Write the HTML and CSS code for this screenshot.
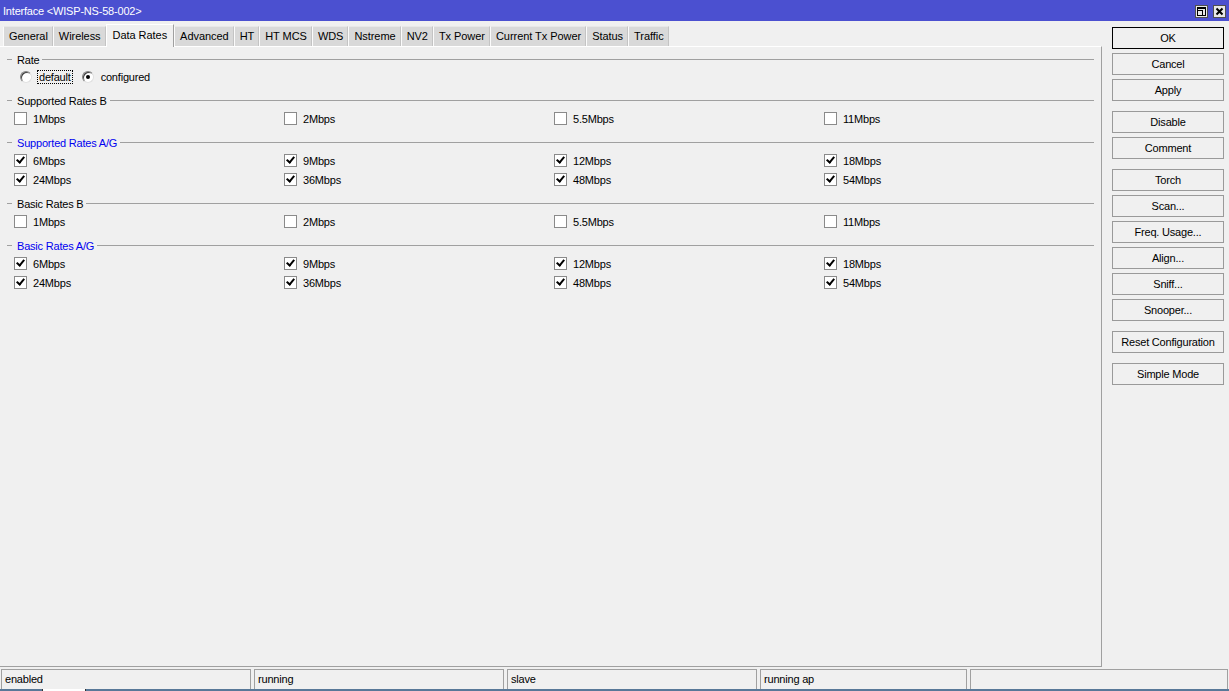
FILE: index.html
```html
<!DOCTYPE html>
<html lang="en">
<head>
    <meta charset="UTF-8">
    <title>Interface &lt;WISP-NS-58-002&gt;</title>
    <link rel="stylesheet" href="styles.css">
</head>
<body>
<div class="window">
    <div class="titlebar">
        <span class="title">Interface &lt;WISP-NS-58-002&gt;</span>
        <div class="win-btns">
            <span class="win-btn">
                <svg width="13" height="13" viewBox="0 0 13 13">
                    <rect x="0.5" y="0.5" width="12" height="12" fill="#e8e8e8" stroke="#505050"/>
                    <rect x="2.5" y="2.5" width="8" height="8" fill="none" stroke="#000"/>
                    <rect x="2.5" y="5.5" width="5" height="5" fill="none" stroke="#000"/>
                    <line x1="2" y1="3.5" x2="11" y2="3.5" stroke="#000"/>
                </svg>
            </span>
            <span class="win-btn">
                <svg width="13" height="13" viewBox="0 0 13 13">
                    <rect x="0.5" y="0.5" width="12" height="12" fill="#e8e8e8" stroke="#505050"/>
                    <path d="M3.5 3.5 L9.5 9.5 M9.5 3.5 L3.5 9.5" stroke="#000" stroke-width="2"/>
                </svg>
            </span>
        </div>
    </div>

    <div class="body">
        <div class="main">
            <div class="tabs">
                <div class="tab">General</div>
                <div class="tab">Wireless</div>
                <div class="tab active">Data Rates</div>
                <div class="tab">Advanced</div>
                <div class="tab">HT</div>
                <div class="tab">HT MCS</div>
                <div class="tab">WDS</div>
                <div class="tab">Nstreme</div>
                <div class="tab">NV2</div>
                <div class="tab">Tx Power</div>
                <div class="tab">Current Tx Power</div>
                <div class="tab">Status</div>
                <div class="tab">Traffic</div>
            </div>

            <div class="panel">
                <!-- Rate -->
                <div class="group">
                    <div class="group-title">Rate</div>
                    <div class="radio-row">
                        <span class="radio"></span>
                        <span class="radio-label focused">default</span>
                        <span class="radio checked"></span>
                        <span class="radio-label">configured</span>
                    </div>
                </div>

                <div class="group">
                    <div class="group-title">Supported Rates B</div>
                    <div class="checks">
                        <label class="check"><span class="box"></span>1Mbps</label>
                        <label class="check"><span class="box"></span>2Mbps</label>
                        <label class="check"><span class="box"></span>5.5Mbps</label>
                        <label class="check"><span class="box"></span>11Mbps</label>
                    </div>
                </div>

                <div class="group">
                    <div class="group-title blue">Supported Rates A/G</div>
                    <div class="checks">
                        <label class="check"><span class="box on"></span>6Mbps</label>
                        <label class="check"><span class="box on"></span>9Mbps</label>
                        <label class="check"><span class="box on"></span>12Mbps</label>
                        <label class="check"><span class="box on"></span>18Mbps</label>
                        <label class="check"><span class="box on"></span>24Mbps</label>
                        <label class="check"><span class="box on"></span>36Mbps</label>
                        <label class="check"><span class="box on"></span>48Mbps</label>
                        <label class="check"><span class="box on"></span>54Mbps</label>
                    </div>
                </div>

                <div class="group">
                    <div class="group-title">Basic Rates B</div>
                    <div class="checks">
                        <label class="check"><span class="box"></span>1Mbps</label>
                        <label class="check"><span class="box"></span>2Mbps</label>
                        <label class="check"><span class="box"></span>5.5Mbps</label>
                        <label class="check"><span class="box"></span>11Mbps</label>
                    </div>
                </div>

                <div class="group">
                    <div class="group-title blue">Basic Rates A/G</div>
                    <div class="checks">
                        <label class="check"><span class="box on"></span>6Mbps</label>
                        <label class="check"><span class="box on"></span>9Mbps</label>
                        <label class="check"><span class="box on"></span>12Mbps</label>
                        <label class="check"><span class="box on"></span>18Mbps</label>
                        <label class="check"><span class="box on"></span>24Mbps</label>
                        <label class="check"><span class="box on"></span>36Mbps</label>
                        <label class="check"><span class="box on"></span>48Mbps</label>
                        <label class="check"><span class="box on"></span>54Mbps</label>
                    </div>
                </div>
            </div>
        </div>

        <div class="side">
            <div class="btn default">OK</div>
            <div class="btn">Cancel</div>
            <div class="btn">Apply</div>
            <div class="btn sep">Disable</div>
            <div class="btn">Comment</div>
            <div class="btn sep">Torch</div>
            <div class="btn">Scan...</div>
            <div class="btn">Freq. Usage...</div>
            <div class="btn">Align...</div>
            <div class="btn">Sniff...</div>
            <div class="btn">Snooper...</div>
            <div class="btn sep">Reset Configuration</div>
            <div class="btn sep">Simple Mode</div>
        </div>
    </div>

    <div class="statusbar">
        <div class="cell w250">enabled</div>
        <div class="cell w250">running</div>
        <div class="cell w250">slave</div>
        <div class="cell w207">running ap</div>
        <div class="cell wlast"></div>
    </div>
    <div class="taskbar"><span class="task-item"></span></div>
</div>
</body>
</html>
```

FILE: styles.css
```css
* {
    box-sizing: border-box;
}

body {
    margin: 0;
    background-color: #f0f0f0;
    font-family: "Liberation Sans", Arial, sans-serif;
    font-size: 11px;
    color: #000;
}

.window {
    width: 1229px;
    height: 691px;
    overflow: hidden;
    background-color: #f0f0f0;
}

/* Title bar */
.titlebar {
    height: 21px;
    background-color: #4b50d0;
    display: flex;
    align-items: center;
    justify-content: space-between;
    padding: 1px 3px 0 3px;
}

.title {
    color: #fff;
    letter-spacing: -0.2px;
}

.win-btns {
    display: flex;
    gap: 5px;
    margin-top: 1px;
}

.win-btn {
    display: block;
    width: 13px;
    height: 13px;
}

.win-btn svg {
    display: block;
}

/* Body */
.body {
    display: flex;
    height: 646px;
}

.main {
    width: 1102px;
    display: flex;
    flex-direction: column;
}

/* Tabs */
.tabs {
    height: 25px;
    display: flex;
    align-items: flex-end;
    padding-left: 3px;
    position: relative;
    z-index: 1;
}

.tab {
    height: 20px;
    line-height: 19px;
    padding: 0 4px 0 5px;
    background-color: #d9d9d9;
    border-left: 1px solid #fbfbfb;
    border-top: 1px solid #e8e8e8;
    border-right: 1px solid #c4c4c4;
    letter-spacing: -0.05px;
    white-space: nowrap;
}

.tab.active {
    height: 23px;
    line-height: 20px;
    margin-bottom: -1px;
    background-color: #f0f0f0;
    border-top: 1px solid #fff;
    border-left: 1px solid #fff;
    border-right: 1px solid #a0a0a0;
    padding: 0 6px;
}

/* Content panel */
.panel {
    height: 621px;
    border-top: 1px solid #fff;
    border-right: 1px solid #a0a0a0;
    border-bottom: 1px solid #a0a0a0;
    padding: 4px 7px 0 7px;
}

.group {
    margin-bottom: 6px;
}

.group-title {
    height: 17px;
    display: flex;
    align-items: center;
    letter-spacing: -0.2px;
}

.group-title::before {
    content: "";
    width: 5px;
    height: 1px;
    background-color: #a0a0a0;
    margin-right: 5px;
}

.group-title::after {
    content: "";
    flex: 1;
    height: 1px;
    background-color: #a0a0a0;
    margin-left: 3px;
}

.group-title.blue {
    color: #0000f0;
}

.radio-row {
    height: 18px;
    display: flex;
    align-items: center;
    padding-left: 13px;
}

.radio {
    width: 12px;
    height: 12px;
    border-radius: 50%;
    background-color: #fff;
    border: 1px solid;
    border-color: #808080 #e0e0e0 #e0e0e0 #808080;
    box-shadow: inset 1px 1px 0 #404040;
    position: relative;
}

.radio.checked::after {
    content: "";
    position: absolute;
    left: 3px;
    top: 3px;
    width: 4px;
    height: 4px;
    border-radius: 50%;
    background-color: #000;
}

.radio-label {
    margin-left: 5px;
    margin-right: 9px;
    padding: 0 1px;
    border: 1px dotted transparent;
    line-height: 12px;
    letter-spacing: -0.2px;
}

.radio-label.focused {
    border-color: #000;
}

/* Checkbox grid */
.checks {
    display: grid;
    grid-template-columns: repeat(4, 270px);
    padding-left: 7px;
}

.check {
    height: 19px;
    display: flex;
    align-items: center;
    gap: 6px;
    letter-spacing: -0.2px;
}

.box {
    width: 13px;
    height: 13px;
    border: 1px solid #8a8a8a;
    background-color: #fff;
    position: relative;
}

.box.on::after {
    content: "";
    position: absolute;
    left: 3px;
    top: 0px;
    width: 3px;
    height: 6px;
    border-right: 2px solid #000;
    border-bottom: 2px solid #000;
    transform: rotate(40deg);
}

/* Side buttons */
.side {
    width: 127px;
    padding: 6px 0 0 10px;
}

.btn {
    width: 112px;
    height: 22px;
    line-height: 20px;
    margin-bottom: 4px;
    text-align: center;
    border: 1px solid #9a9a9a;
    background-color: #f0f0f0;
    letter-spacing: -0.2px;
}

.btn.default {
    border-color: #000;
}

.btn.sep {
    margin-top: 10px;
}

/* Status bar */
.statusbar {
    margin-top: 2px;
    height: 20px;
    display: flex;
    gap: 3px;
    padding-left: 1px;
}

.cell {
    height: 20px;
    border-top: 1px solid #a0a0a0;
    border-left: 1px solid #a0a0a0;
    border-right: 1px solid #a0a0a0;
    padding-left: 3px;
    line-height: 19px;
    letter-spacing: -0.2px;
}

.w250 {
    width: 250px;
}

.w207 {
    width: 207px;
}

.wlast {
    width: 258px;
}

.taskbar {
    height: 2px;
    background-color: #587898;
    position: relative;
}

.task-item {
    position: absolute;
    left: 42px;
    top: 0;
    width: 44px;
    height: 2px;
    background-color: #fff;
    border-left: 1px solid #333;
    border-right: 1px solid #333;
}
```
